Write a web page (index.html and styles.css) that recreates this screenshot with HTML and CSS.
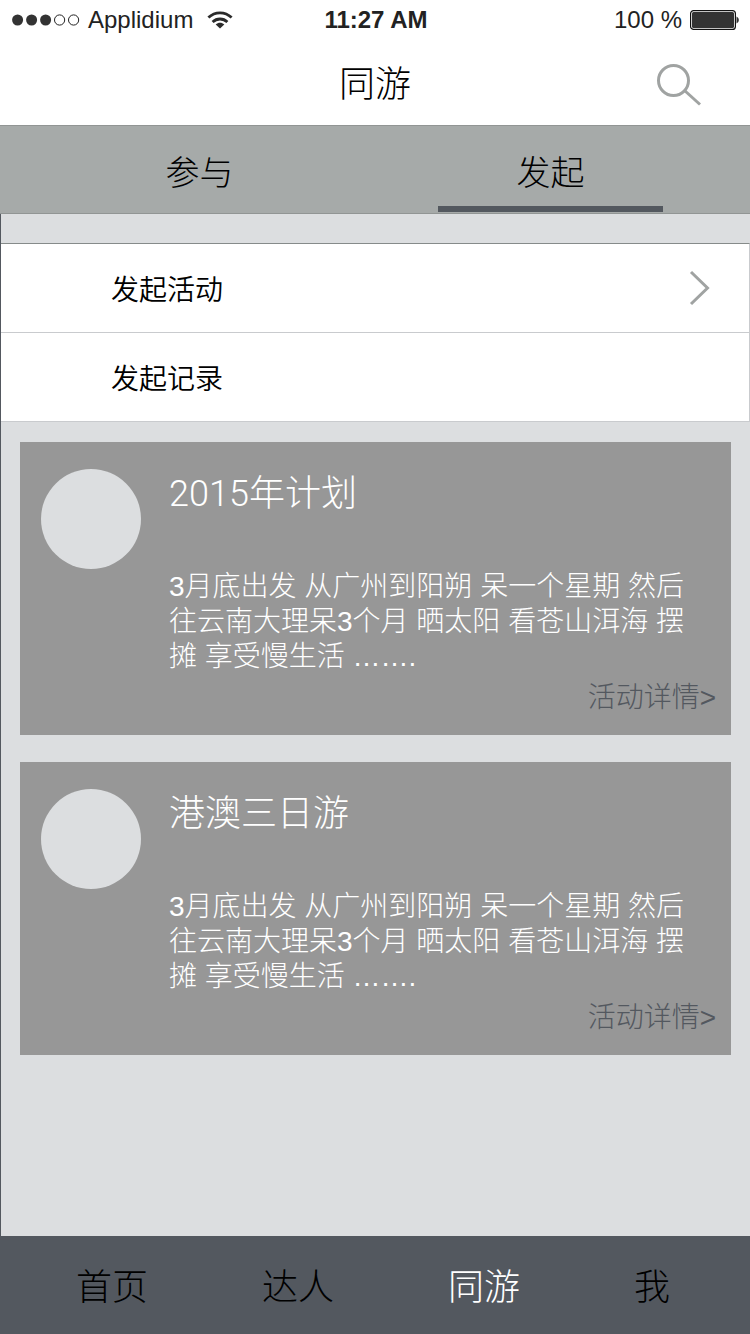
FILE: index.html
```html
<!DOCTYPE html>
<html lang="zh-CN">
<head>
<meta charset="utf-8">
<meta name="viewport" content="width=device-width, initial-scale=1">
<title>同游</title>
<link rel="stylesheet" href="styles.css">
</head>
<body>
<div class="app">
  <div class="status">
    <div class="status-left">
      <svg class="signal" width="68" height="12" viewBox="0 0 68 12" aria-hidden="true">
        <g fill="#333"><circle cx="5.6" cy="6" r="5.5"/><circle cx="19.6" cy="6" r="5.5"/><circle cx="33.6" cy="6" r="5.5"/></g>
        <g fill="none" stroke="#222" stroke-width="1"><circle cx="47.6" cy="6" r="5.1"/><circle cx="61.6" cy="6" r="5.1"/></g>
      </svg>
      <span>Applidium</span>
      <svg class="wifi" width="26" height="18" viewBox="0 0 26 18" aria-hidden="true">
        <g fill="none" stroke="#2b2b2b" stroke-width="2.8">
          <path d="M1.4 6.6C8 .2 18 .2 24.6 6.6"/>
          <path d="M5.6 11C9.8 7 16.2 7 20.4 11"/>
        </g>
        <path fill="#2b2b2b" d="M13 17.6 8.7 13.4C11.2 11.3 14.8 11.3 17.3 13.4Z"/>
      </svg>
    </div>
    <div class="clock">11:27 AM</div>
    <div class="status-right">
      <span>100 %</span>
      <svg class="battery" width="50" height="20" viewBox="0 0 50 20" aria-hidden="true">
        <rect x=".6" y=".6" width="44.8" height="18.8" rx="3" fill="#fff" stroke="#111" stroke-width="1.2"/>
        <rect x="2" y="2" width="42" height="16" rx="1.5" fill="#333"/>
        <path fill="#333" d="M46.5 6.5C49.6 8 49.6 12 46.5 13.5Z"/>
      </svg>
    </div>
  </div>
  <header class="header">
    <h1 class="title">同游</h1>
    <button class="search" type="button" aria-label="搜索">
      <svg width="46" height="42" viewBox="0 0 46 42" aria-hidden="true">
        <g fill="none" stroke="#a0a3a2" stroke-width="3"><circle cx="17.500" cy="16.500" r="15"/><path d="M28 26 44 40.500"/></g>
      </svg>
    </button>
  </header>
  <nav class="tabs">
    <button class="tab" type="button">参与</button>
    <button class="tab active" type="button">发起</button>
  </nav>
  <main class="content">
    <div class="menu">
      <button class="menu-row" type="button">
        <span>发起活动</span>
        <svg width="22" height="36" viewBox="0 0 22 36" aria-hidden="true"><path fill="none" stroke="#a0a3a2" stroke-width="3" d="M2 2 18.500 18 2 34"/></svg>
      </button>
      <h2 class="menu-row">发起记录</h2>
    </div>
    <div class="cards">
      <article class="card">
        <div class="avatar"></div>
        <div class="card-body">
          <h3 class="card-title">2015年计划</h3>
          <p class="card-text">3月底出发 从广州到阳朔 呆一个星期 然后往云南大理呆3个月 晒太阳 看苍山洱海 摆摊 享受慢生活 …….</p>
          <a class="more" href="#">活动详情&gt;</a>
        </div>
      </article>
      <article class="card">
        <div class="avatar"></div>
        <div class="card-body">
          <h3 class="card-title">港澳三日游</h3>
          <p class="card-text">3月底出发 从广州到阳朔 呆一个星期 然后往云南大理呆3个月 晒太阳 看苍山洱海 摆摊 享受慢生活 …….</p>
          <a class="more" href="#">活动详情&gt;</a>
        </div>
      </article>
    </div>
  </main>
  <nav class="bottom">
    <a href="#">首页</a>
    <a href="#">达人</a>
    <a class="current" href="#" aria-current="page">同游</a>
    <a href="#">我</a>
  </nav>
</div>
</body>
</html>
```
FILE: styles.css
```css
* { box-sizing: border-box; }

body {
  margin: 0;
  background: #fff;
  color: #000;
  font-family: Roboto, "Noto Sans CJK SC", sans-serif;
  font-weight: 300;
}

h1, h2, h3, p { margin: 0; font-weight: 300; }

button {
  border: 0;
  padding: 0;
  background: none;
  color: inherit;
  font: inherit;
  cursor: pointer;
}

a { color: inherit; text-decoration: none; }
svg { display: block; flex: none; }

.app {
  display: flex;
  flex-direction: column;
  min-height: 100vh;
}

.status {
  display: grid;
  grid-template-columns: 1fr auto 1fr;
  align-items: center;
  height: 40px;
  padding: 0 10px 0 12px;
  color: #222;
  font-family: "Liberation Sans", sans-serif;
  font-size: 24px;
  font-weight: 400;
}

.status-left, .status-right { display: flex; align-items: center; gap: 8px; }
.status-right { justify-content: flex-end; }
.wifi { margin-left: 6px; }
.clock { font-weight: 700; }

.header {
  display: grid;
  grid-template-columns: 1fr auto 1fr;
  align-items: center;
  height: 85px;
  padding: 4px 48px 0;
}

.title { grid-column: 2; font-size: 36px; line-height: 54px; }
.search { justify-self: end; }

.tabs {
  display: grid;
  grid-template-columns: 1fr 1fr;
  height: 89px;
  padding: 0 24px;
  border-top: 1px solid #919594;
  border-bottom: 1px solid #919594;
  background: #a6aaa9;
}

.tab {
  display: flex;
  align-items: center;
  justify-content: center;
  margin: 0 63px 1px;
  border: solid transparent;
  border-width: 6px 0;
  padding-top: 2px;
  font-size: 34px;
}

.tab.active { border-bottom-color: #53585f; }

.content {
  flex: 1;
  padding-top: 29px;
  border-left: 1px solid #53585f;
  background: #dcdee0;
}

.menu { border-top: 1px solid #868b8a; border-right: 1px solid #c9cbce; }

.menu-row {
  display: flex;
  align-items: center;
  justify-content: space-between;
  width: 100%;
  height: 89px;
  padding: 0 38px 0 110px;
  border-bottom: 1px solid #c9cbce;
  background: #fff;
  font-size: 28px;
  font-weight: 350;
}

.cards {
  display: flex;
  flex-direction: column;
  gap: 27px;
  padding: 20px 19px;
}

.card {
  display: flex;
  gap: 28px;
  padding: 27px 15px 18px 21px;
  background: #979797;
  color: #fff;
}

.avatar {
  flex: none;
  width: 100px;
  height: 100px;
  border-radius: 50%;
  background: #dcdee0;
}

.card-body { flex: 1; display: flex; flex-direction: column; }
.card-title { font-size: 36px; line-height: 50px; }

.card-text, .more {
  font-family: "Liberation Sans", "Noto Sans CJK SC", sans-serif;
  font-size: 28px;
}

.card-text { margin-top: 50px; padding-right: 24px; line-height: 35px; }
.more { align-self: flex-end; margin-top: 5px; color: #53585f; line-height: 38px; }

.bottom {
  display: flex;
  align-items: center;
  justify-content: space-between;
  height: 98px;
  padding: 0 80px 2px 76px;
  background: #53585f;
  font-size: 36px;
}

.bottom .current { color: #fff; }
```
